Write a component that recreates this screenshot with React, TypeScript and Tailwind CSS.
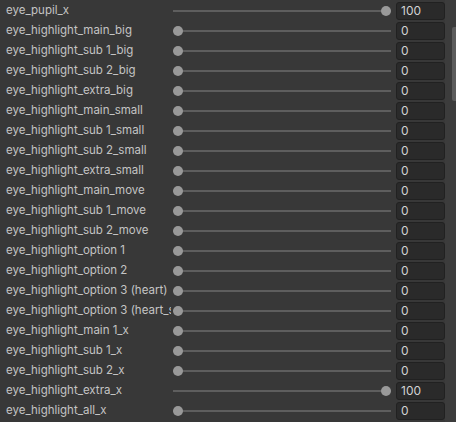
const rows: [string, number][] = [
  ['eye_pupil_x', 100],
  ['eye_highlight_main_big', 0],
  ['eye_highlight_sub 1_big', 0],
  ['eye_highlight_sub 2_big', 0],
  ['eye_highlight_extra_big', 0],
  ['eye_highlight_main_small', 0],
  ['eye_highlight_sub 1_small', 0],
  ['eye_highlight_sub 2_small', 0],
  ['eye_highlight_extra_small', 0],
  ['eye_highlight_main_move', 0],
  ['eye_highlight_sub 1_move', 0],
  ['eye_highlight_sub 2_move', 0],
  ['eye_highlight_option 1', 0],
  ['eye_highlight_option 2', 0],
  ['eye_highlight_option 3 (heart)', 0],
  ['eye_highlight_option 3 (heart_small)', 0],
  ['eye_highlight_main 1_x', 0],
  ['eye_highlight_sub 1_x', 0],
  ['eye_highlight_sub 2_x', 0],
  ['eye_highlight_extra_x', 100],
  ['eye_highlight_all_x', 0],
];

function SliderRow({ label, value }: { label: string; value: number }) {
  const pct = value / 100;
  return (
    <div className="flex h-[20px] items-center">
      <div className="w-[171px] shrink-0 overflow-hidden whitespace-nowrap pl-[6px] text-[11.5px] text-[#c4c4c4]">
        {label}
      </div>
      <div className="relative ml-[2px] h-[20px] w-[218px] shrink-0">
        <div className="absolute left-0 right-0 top-[9px] h-[2px] bg-[#5e5e5e]" />
        <div
          className="absolute top-[5px] h-[10px] w-[10px] rounded-full bg-[#999999]"
          style={{ left: `${pct * 208}px` }}
        />
      </div>
      <div className="ml-[5px] flex h-[18px] w-[49px] shrink-0 items-center rounded-[3px] border border-[#212121] bg-[#2a2a2a] pl-[4px] text-[12px] text-[#d2d2d2]">
        {value}
      </div>
    </div>
  );
}

export default function App() {
  return (
    <div
      className="flex h-[422px] w-[456px] overflow-hidden bg-[#383838]"
      style={{ fontFamily: 'Inter, "Noto Sans", sans-serif' }}
    >
      <div className="flex w-[445px] flex-col pt-[1px]">
        {rows.map(([label, value]) => (
          <SliderRow key={label} label={label} value={value} />
        ))}
      </div>
      <div className="flex w-[11px] flex-col items-end bg-[#3c3c3c] pt-[27px]">
        <div className="h-[74px] w-[4px] rounded-l-[2px] bg-[#5c5c5c]" />
      </div>
    </div>
  );
}
